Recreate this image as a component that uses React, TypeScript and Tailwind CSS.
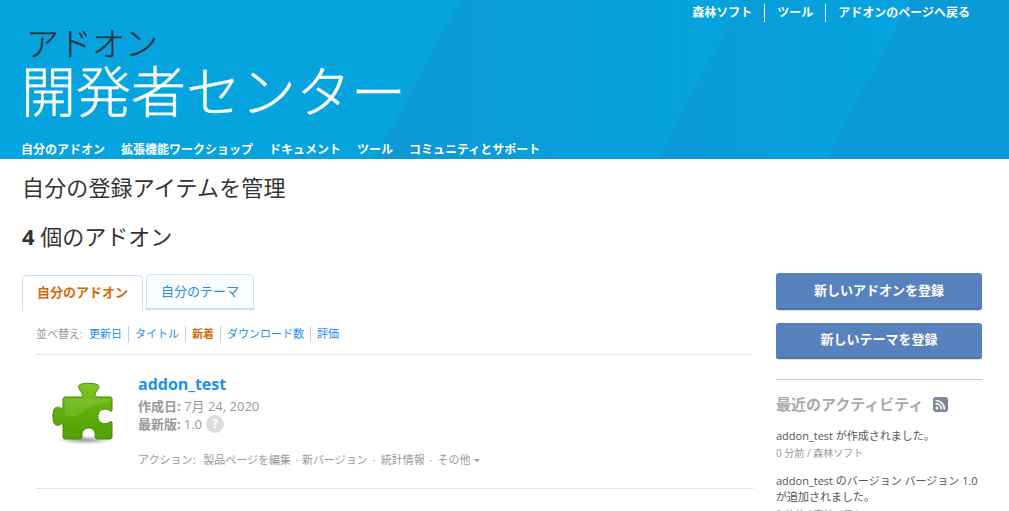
const jp = "font-['Open_Sans','Noto_Sans_CJK_JP',sans-serif]";

function HeaderBands() {
  return (
    <svg className="absolute inset-0 h-full w-full" viewBox="0 0 1009 159" preserveAspectRatio="none" aria-hidden="true">
      <defs>
        <linearGradient id="bandA" x1="0" y1="0" x2="1" y2="0">
          <stop offset="0" stopColor="#0e98d6" />
          <stop offset="1" stopColor="#03a4df" />
        </linearGradient>
        <linearGradient id="bandB" x1="0" y1="0" x2="1" y2="0">
          <stop offset="0" stopColor="#0c99d7" />
          <stop offset="1" stopColor="#03a4df" />
        </linearGradient>
        <linearGradient id="bandC" x1="0" y1="0" x2="1" y2="0">
          <stop offset="0" stopColor="#0c99d7" />
          <stop offset="1" stopColor="#0a9ad8" />
        </linearGradient>
      </defs>
      <rect width="1009" height="159" fill="#05a4df" />
      <polygon points="460,0 741,0 658,159 375,159" fill="url(#bandA)" />
      <polygon points="741,0 910,0 827,159 658,159" fill="url(#bandB)" />
      <polygon points="910,0 1009,0 1009,159 827,159" fill="url(#bandC)" />
    </svg>
  );
}

function Puzzle() {
  return (
    <svg width="64" height="64" viewBox="0 0 64 64" aria-hidden="true">
      <defs>
        <linearGradient id="pz" x1="0" y1="0" x2="0" y2="1">
          <stop offset="0" stopColor="#84c722" />
          <stop offset="0.5" stopColor="#5fae0a" />
          <stop offset="1" stopColor="#52a006" />
        </linearGradient>
        <radialGradient id="pzShadow">
          <stop offset="0" stopColor="#000" stopOpacity="0.4" />
          <stop offset="1" stopColor="#000" stopOpacity="0" />
        </radialGradient>
      </defs>
      <ellipse cx="33" cy="59" rx="29" ry="4.500" fill="url(#pzShadow)" />
      <path
        d="M13 16H29C31 16 31 14 30 12C28 9 26 7 27 4.500C29 1.500 44 1.500 46.500 4.500C48 7 45 9 43.500 12C42.500 14 43 16 45 16H58C59.500 16 60 17 60 18V29C60 30.500 58.500 30.500 57.500 29.500C55 27.500 50 27.500 47.500 30.500C45 33.500 45.500 39 48 41C51 43.500 55 43 57.500 41C58.500 40 60 40.500 60 42V56C60 57.500 59 58 58 58H46C43.500 58 43 56.500 43 55C44 51 41 47 37 47C33 47 29.500 50 30 54C30.500 56 30 58 28 58H13C12 58 11 57 11 56V44C11 42.500 9.500 42.500 8.500 43.500C6 45 3 44.500 2 42C0.500 38 0.500 32 2 28.500C3 26 6 25.500 8.500 27C9.500 27.500 11 27.500 11 26V18C11 17 12 16 13 16Z"
        fill="url(#pz)"
        stroke="#418a03"
        strokeWidth="1"
      />
      <path d="M13 18H58C54 24 40 22 32 30C26 36 18 36 13 35Z" fill="#fff" opacity="0.1" />
    </svg>
  );
}

function RssBadge() {
  return (
    <span className="ml-[10px] flex h-[15px] w-[15px] items-center justify-center rounded-[3px] bg-[#7d8798]">
      <svg width="11" height="11" viewBox="0 0 11 11" aria-hidden="true">
        <circle cx="2" cy="9" r="1.500" fill="#fff" />
        <path d="M0.500 4.500a6 6 0 0 1 6 6M0.500 1.500a9 9 0 0 1 9 9" fill="none" stroke="#fff" strokeWidth="1.600" />
      </svg>
    </span>
  );
}

export default function App() {
  return (
    <div className={`h-[511px] w-[1009px] overflow-hidden bg-white ${jp}`}>
      <header className="relative h-[159px] overflow-hidden">
        <HeaderBands />
        <div className="relative flex h-full flex-col pl-[21px]">
          <nav className="flex h-[23px] items-center justify-end pr-[39px] pt-[3px] text-[12px] font-bold text-white">
            <span className="pr-[12px]">森林ソフト</span>
            <span className="border-l border-white px-[12px]">ツール</span>
            <span className="border-l border-white pl-[12px]">アドオンのページへ戻る</span>
          </nav>
          <div className="mt-[5px] pl-[5px] text-[33px] leading-[34px] font-light text-[#2b3340] [-webkit-text-stroke:0.3px_#2b3340]">アドオン</div>
          <div className="text-[55px] leading-[60px] font-light text-white [-webkit-text-stroke:0.4px_white]">開発者センター</div>
          <nav className="mt-[20px] flex gap-[16px] text-[12px] leading-[18px] font-bold text-white">
            <span>自分のアドオン</span>
            <span>拡張機能ワークショップ</span>
            <span>ドキュメント</span>
            <span>ツール</span>
            <span>コミュニティとサポート</span>
          </nav>
        </div>
      </header>

      <main className="px-[22px]">
        <h1 className="pt-[14px] text-[22px] leading-[28px] font-normal tracking-[0.15px] text-[#333]">自分の登録アイテムを管理</h1>
        <h2 className="mt-[21px] text-[22px] leading-[28px] font-normal text-[#333]">
          <b>4</b> 個のアドオン
        </h2>

        <div className="mt-[24px] flex gap-[22px]">
          <section className="w-[732px]">
            <div className="flex h-[36px] items-end gap-[3px] text-[13px]">
              <div className="flex h-[35px] w-[121px] items-center justify-center rounded-t-[5px] border border-b-0 border-[#c9dff3] font-bold text-[#d46a0a]">
                自分のアドオン
              </div>
              <div className="flex h-[36px] w-[108px] items-center justify-center rounded-t-[5px] border border-b-2 border-[#c9dff3] bg-[#fbfdff] text-[#1f8ff0]">
                自分のテーマ
              </div>
            </div>

            <div className="ml-[14px] border-b border-dotted border-[#addcfb]">
              <div className="flex h-[44px] items-center pt-[5px] text-[11px] text-[#1f8ff0]">
                <span className="mr-[6px] text-[#999]">並べ替え:</span>
                <span className="pr-[6px]">更新日</span>
                <span className="border-l border-[#ccc] px-[6px]">タイトル</span>
                <span className="border-l border-[#ccc] px-[6px] font-bold text-[#d46a0a]">新着</span>
                <span className="border-l border-[#ccc] px-[6px]">ダウンロード数</span>
                <span className="border-l border-[#ccc] pl-[6px]">評価</span>
              </div>
            </div>

            <div className="ml-[14px] h-[134px] border-b border-dotted border-[#addcfb]">
              <div className="flex pt-[19px]">
                <div className="ml-[16px] mt-[7px] w-[86px] shrink-0">
                  <Puzzle />
                </div>
                <div>
                  <div className="text-[16px] leading-[20px] font-bold text-[#1f8ff0]">addon_test</div>
                  <div className="mt-[3px] text-[13px] leading-[18px] text-[#999]">
                    <b>作成日:</b> 7月 24, 2020
                  </div>
                  <div className="flex items-center text-[13px] leading-[18px] text-[#999]">
                    <b>最新版:</b>
                    <span className="ml-[3px]">1.0</span>
                    <span className="ml-[4px] flex h-[18px] w-[18px] items-center justify-center rounded-full bg-[#ddd] text-[12px] font-bold text-white">?</span>
                  </div>
                  <div className="mt-[19px] flex items-center text-[11px] leading-[16px] text-[#999]">
                    <span className="mr-[8px]">アクション:</span>
                    <span>製品ページを編集</span>
                    <span className="mx-[4px]">·</span>
                    <span>新バージョン</span>
                    <span className="mx-[5px]">·</span>
                    <span>統計情報</span>
                    <span className="mx-[5px]">·</span>
                    <span>その他</span>
                    <span className="ml-[3px] h-0 w-0 border-x-[3px] border-t-[3px] border-x-transparent border-t-[#999]"></span>
                  </div>
                </div>
              </div>
            </div>
          </section>

          <aside className="mt-[-1px] w-[206px]">
            <div className="flex h-[37px] items-center justify-center rounded-[3px] border-b-2 border-[#4e74a8] bg-[#5882bd] text-[13px] font-bold text-white shadow-[0_1px_1px_#ddd]">
              新しいアドオンを登録
            </div>
            <div className="mt-[13px] flex h-[36px] items-center justify-center rounded-[3px] border-b-2 border-[#4e74a8] bg-[#5882bd] text-[13px] font-bold text-white shadow-[0_1px_1px_#ddd]">
              新しいテーマを登録
            </div>
            <div className="mt-[20px] border-t border-[#ccc] pt-[14px]">
              <div className="flex items-center text-[15px] leading-[20px] font-bold text-[#aaa]">
                最近のアクティビティ
                <RssBadge />
              </div>
              <div className="mt-[14px] text-[11px] leading-[16px] text-[#555]">addon_test が作成されました。</div>
              <div className="mt-[1px] text-[10px] leading-[16px] text-[#999]">0 分前 / 森林ソフト</div>
              <div className="mt-[12px] text-[11px] leading-[16px] text-[#555]">addon_test のバージョン バージョン 1.0 が追加されました。</div>
              <div className="mt-[1px] text-[10px] leading-[16px] text-[#999]">0 分前 / 森林ソフト</div>
            </div>
          </aside>
        </div>
      </main>
    </div>
  );
}
